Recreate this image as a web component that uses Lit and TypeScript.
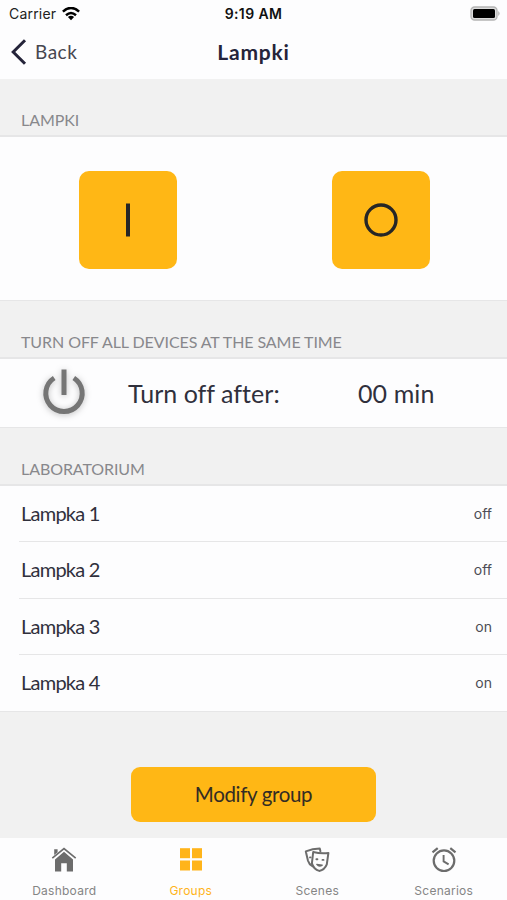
import { LitElement, html, css, svg } from "lit";
import { customElement } from "lit/decorators.js";
import { classMap } from "lit/directives/class-map.js";

const lamps = [
  { name: "Lampka 1", state: "off" },
  { name: "Lampka 2", state: "off" },
  { name: "Lampka 3", state: "on" },
  { name: "Lampka 4", state: "on" },
];

const houseIcon = svg`
  <path fill="currentColor" d="M3.2 2.2h3.4v3.1L3.2 8z"/>
  <path fill="currentColor" d="M13 4.8 22 12.4v12h-6.2v-8.2h-5.6v8.2H4v-12z"/>
  <path fill="none" stroke="currentColor" stroke-width="1.7" d="M1.3 11.1 13 1.6l11.7 9.5"/>`;

const gridIcon = svg`
  <g fill="currentColor">
    <rect x="2" y="1.2" width="10" height="10"/><rect x="14" y="1.2" width="10" height="10"/>
    <rect x="2" y="13.5" width="10" height="10"/><rect x="14" y="13.5" width="10" height="10"/>
  </g>`;

const masksIcon = svg`
  <g fill="none" stroke="currentColor" stroke-width="2" stroke-linecap="round" stroke-linejoin="round">
    <path d="M16.4 4.2 15.8 1.6Q8.6 1.8 1.8 4.4L4 13.8Q5 17.4 8.4 19.2"/>
    <path d="M9.2 5Q16.8 7 24.4 6L22.8 17.4Q20.6 23 15.2 23.9Q9.8 22.4 7.9 16.4Z"/>
    <path d="M12.8 17.4Q15.2 20.2 18.2 18.1Z" stroke-width="1.4"/>
    <path d="M12.4 12.2h1M18.5 12.9h1M6 10.4h.6" stroke-width="1.9"/>
  </g>`;

const alarmIcon = svg`
  <g fill="none" stroke="currentColor" stroke-width="2.2">
    <circle cx="13" cy="13.7" r="10.3"/>
    <path d="M1.5 5.3 6.7 1.1M24.5 5.3l-5.2-4.2"/>
    <path d="M12.6 8v6.4l5 3" stroke-width="1.9"/>
  </g>`;

const tabs = [
  { label: "Dashboard", icon: houseIcon, active: false },
  { label: "Groups", icon: gridIcon, active: true },
  { label: "Scenes", icon: masksIcon, active: false },
  { label: "Scenarios", icon: alarmIcon, active: false },
];

@customElement("app-root")
export class AppRoot extends LitElement {
  static styles = css`
    :host {
      display: flex;
      flex-direction: column;
      box-sizing: border-box;
      height: 900px;
      overflow: hidden;
      background: #f1f1f1;
      color: #30303c;
      font-family: Lato, sans-serif;
      white-space: nowrap;
    }
    svg { display: block; flex: none; }
    .status, .nav {
      display: grid;
      grid-template-columns: 1fr auto 1fr;
      align-items: center;
      box-sizing: border-box;
      background: #fdfdfe;
    }
    .status {
      height: 27px;
      padding: 0 6px 0 9px;
      font-family: Inter, sans-serif;
      font-size: 14px;
      color: #222;
    }
    .carrier { display: flex; align-items: center; gap: 6px; letter-spacing: 0.2px; }
    .time { font-weight: 600; letter-spacing: 0.4px; color: #111; margin-right: 3px; }
    .battery { justify-self: end; }
    .nav { height: 52px; padding: 0 11px 3px; }
    .back { display: flex; align-items: center; gap: 8px; font-size: 19px; letter-spacing: 0.5px; color: #464650; }
    .title { font-size: 21px; font-weight: 700; letter-spacing: 0.8px; color: #25243a; }
    .section {
      display: flex;
      align-items: flex-end;
      box-sizing: border-box;
      height: 58px;
      padding: 0 21px 5px;
      border-bottom: 2px solid #e6e6e7;
      font-size: 16px;
      line-height: 20px;
      letter-spacing: -0.08px;
      color: #88888c;
    }
    .panel { background: #fdfdfe; border-bottom: 1px solid #e6e6e7; }
    .switches {
      display: grid;
      grid-template-columns: 1fr 1fr;
      place-items: center;
      box-sizing: border-box;
      height: 164px;
      padding: 2px 0 0 1px;
    }
    .key {
      display: grid;
      place-items: center;
      width: 98px;
      height: 98px;
      border-radius: 10px;
      background: #ffb715;
    }
    .timer { display: flex; align-items: center; height: 68px; font-size: 25px; }
    .power { margin: 0 0 5px 39px; filter: drop-shadow(0 1px 3px rgba(0, 0, 0, 0.25)); }
    .after { width: 152px; margin-left: 39px; letter-spacing: 0.02px; }
    .minutes { margin-left: 78px; letter-spacing: 0.1px; }
    .row {
      display: flex;
      align-items: center;
      justify-content: space-between;
      box-sizing: border-box;
      height: 56.25px;
      margin-left: 19px;
      padding: 0 15px 0 2px;
      border-bottom: 1.5px solid #e6e6e7;
      font-size: 20px;
      letter-spacing: -0.75px;
    }
    .row:last-child { border-bottom: 0; }
    .row span:first-child { padding-bottom: 1px; }
    .state { font-family: Inter, sans-serif; font-size: 14px; letter-spacing: 0; color: #4c4c54; }
    .footer { flex: 1; display: flex; justify-content: center; align-items: flex-start; padding-top: 55px; }
    .modify {
      display: grid;
      place-items: center;
      box-sizing: border-box;
      width: 245px;
      height: 55px;
      padding-bottom: 1px;
      border-radius: 9px;
      background: #ffb715;
      color: #332c24;
      font-size: 20.5px;
      letter-spacing: -0.35px;
    }
    .tabs { display: grid; grid-template-columns: repeat(4, 1fr); box-sizing: border-box; height: 62px; padding-left: 1px; background: #fdfdfe; }
    .tab {
      display: flex;
      flex-direction: column;
      align-items: center;
      gap: 9px;
      padding-top: 9px;
      font-family: Inter, sans-serif;
      font-size: 12px;
      line-height: 18px;
      letter-spacing: 0.25px;
      color: #858585;
    }
    .tab svg { color: #6c6c6c; }
    .tab.active, .tab.active svg { color: #ffb41a; }
  `;

  render() {
    return html`
      <div class="status">
        <div class="carrier">
          <span>Carrier</span>
          <svg width="18" height="14" viewBox="0 0 18 14" fill="none" stroke="#000" stroke-width="2.5">
            <path d="M.9 4.6Q9-2.7 17.1 4.6M4 8.2q5-4.3 10 0" />
            <path d="M9 13.2 5.9 10.1q3.1-2.6 6.2 0z" fill="#000" stroke="none" />
          </svg>
        </div>
        <span class="time">9:19 AM</span>
        <svg class="battery" width="31" height="15" viewBox="0 0 31 15">
          <rect x="1" y="1" width="26" height="13" rx="3.6" fill="#ddd" stroke="#b4b4b4" stroke-width="1.3" />
          <rect x="3" y="3" width="22" height="9" rx="1.5" fill="#000" />
          <path d="M28.3 5v5q2.6-2.5 0-5z" fill="#aaa" />
        </svg>
      </div>
      <div class="nav">
        <div class="back">
          <svg width="16" height="26" viewBox="0 0 16 26"><path d="M14 1.2 2.2 13 14 24.8" fill="none" stroke="#25243a" stroke-width="3" /></svg>
          <span>Back</span>
        </div>
        <span class="title">Lampki</span>
      </div>
      <div class="section">LAMPKI</div>
      <div class="panel switches">
        <div class="key"><svg width="36" height="36" viewBox="0 0 36 36"><path d="M18 1.5v33" stroke="#262626" stroke-width="4" /></svg></div>
        <div class="key"><svg width="36" height="36" viewBox="0 0 36 36"><circle cx="18" cy="18" r="15" fill="none" stroke="#262626" stroke-width="3.4" /></svg></div>
      </div>
      <div class="section">TURN OFF ALL DEVICES AT THE SAME TIME</div>
      <div class="panel timer">
        <svg class="power" width="50" height="50" viewBox="0 0 50 50">
          <path d="M15.2 12A18.2 18.2 0 1 0 34.8 12M25 3.5V29" fill="none" stroke="#757575" stroke-width="5" />
        </svg>
        <span class="after">Turn off after:</span>
        <span class="minutes">00 min</span>
      </div>
      <div class="section">LABORATORIUM</div>
      <div class="panel">
        ${lamps.map((lamp) => html`<div class="row"><span>${lamp.name}</span><span class="state">${lamp.state}</span></div>`)}
      </div>
      <div class="footer"><div class="modify">Modify group</div></div>
      <div class="tabs">
        ${tabs.map((tab) => html`
          <div class=${classMap({ tab: true, active: tab.active })}>
            <svg width="26" height="26" viewBox="0 0 26 26">${tab.icon}</svg>
            <span>${tab.label}</span>
          </div>`)}
      </div>
    `;
  }
}
